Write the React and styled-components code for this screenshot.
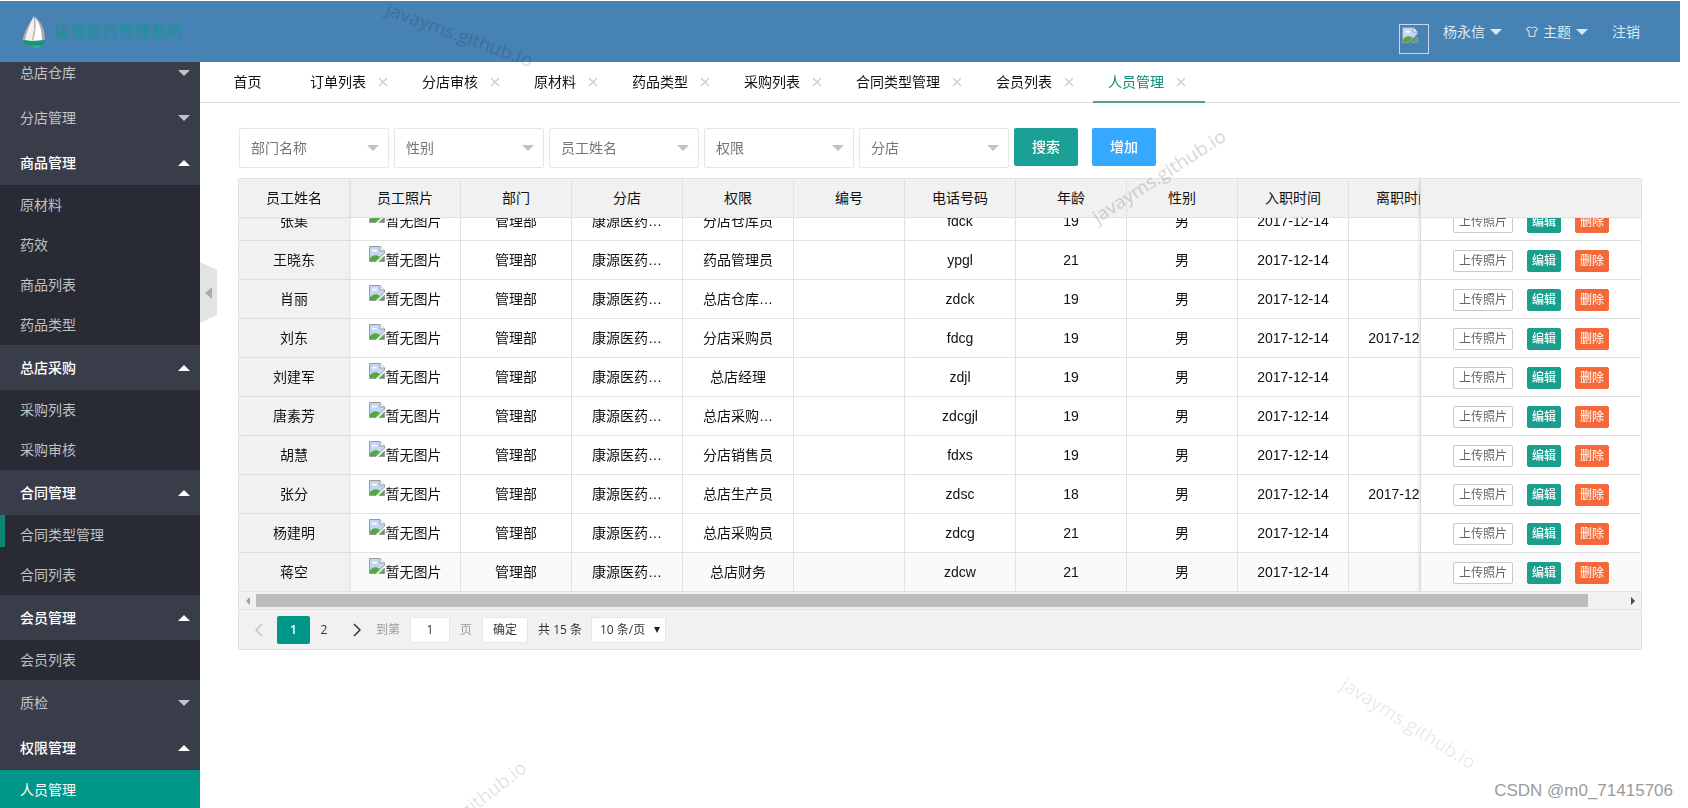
import React, { useLayoutEffect, useRef } from "react";
import styled, { createGlobalStyle, css } from "styled-components";

const GlobalStyle = createGlobalStyle`
  *, *::before, *::after { box-sizing: border-box; }
  body {
    margin: 0;
    background: #fff;
    color: #111;
    font: 14px/20px "Liberation Sans", "Noto Sans CJK SC", sans-serif;
  }
  button, input, select { font: inherit; color: inherit; margin: 0; }
  ul { list-style: none; margin: 0; padding: 0; }
  a { color: inherit; text-decoration: none; }
`;

const Page = styled.div`
  position: relative;
  display: flex;
  flex-direction: column;
  height: 100vh;
  padding: 1px 8px 0 0;
  overflow: hidden;
`;

/* ---------- top bar ---------- */

const TopBar = styled.header`
  flex: none;
  display: flex;
  align-items: center;
  justify-content: space-between;
  height: 61px;
  padding: 0 40px 0 20px;
  background: #4682b4;
`;

const Brand = styled.a`
  display: flex;
  align-items: center;
  gap: 7px;
  color: #22909c;
  font-size: 16px;
  font-weight: 500;
`;

const UserMenu = styled.nav`
  display: flex;
  align-items: center;
  color: #dbe8f2;
`;

const Avatar = styled.span`
  width: 30px;
  height: 30px;
  margin: 14px 14px 0 0;
  padding: 2px;
  border: 1px solid #c5d8e8;
  line-height: 0;
`;

const MenuLink = styled.a`
  display: flex;
  align-items: center;
  gap: 5px;
  margin-left: ${(p) => (p.$first ? 0 : 24)}px;
`;

const Caret = styled.span`
  width: 0;
  height: 0;
  border: 6px solid transparent;
  ${(p) =>
    p.$up
      ? css`border-top-width: 0; border-bottom-color: currentColor;`
      : css`border-bottom-width: 0; border-top-color: currentColor;`}
`;

/* ---------- side navigation ---------- */

const Body = styled.div`
  flex: 1;
  display: flex;
  min-height: 0;
`;

const Side = styled.aside`
  position: relative;
  flex: none;
  width: 200px;
  background: #393d49;
`;

const SideScroll = styled.nav`
  height: 100%;
  overflow: auto;
  scrollbar-width: none;
`;

const NavHead = styled.button`
  display: flex;
  align-items: center;
  justify-content: space-between;
  width: 100%;
  height: 45px;
  padding: 0 10px 0 20px;
  border: 0;
  background: none;
  color: ${(p) => (p.$open ? "#fff" : "#c4c5c9")};
  font-weight: ${(p) => (p.$open ? 500 : 400)};
  text-align: left;
`;

const NavSub = styled.ul`
  background: #282b33;
`;

const NavLink = styled.a`
  display: block;
  position: relative;
  height: 40px;
  padding: 0 20px;
  line-height: 40px;
  color: ${(p) => (p.$active ? "#fff" : "#bfc0c2")};
  background: ${(p) => (p.$active ? "#009688" : "none")};
  ${(p) =>
    p.$marked &&
    css`
      &::before {
        content: "";
        position: absolute;
        left: 0;
        top: 0;
        width: 5px;
        height: 32px;
        background: #0c8478;
      }
    `}
`;

const Collapse = styled.button`
  position: absolute;
  left: 100%;
  top: 200px;
  z-index: 5;
  display: flex;
  align-items: center;
  justify-content: center;
  width: 17px;
  height: 61px;
  padding: 0;
  border: 0;
  background: #e2e3e5;
  clip-path: polygon(0 0, 100% 13%, 100% 87%, 0 100%);
  &::before {
    content: "";
    border: 6px solid transparent;
    border-left: 0;
    border-right: 7px solid #acacae;
  }
`;

/* ---------- tabs ---------- */

const Main = styled.main`
  flex: 1;
  min-width: 0;
`;

const Tabs = styled.div`
  display: flex;
  height: 41px;
  padding-left: 15px;
  border-bottom: 1px solid #dcdcdc;
`;

const Tab = styled.div`
  display: flex;
  align-items: center;
  justify-content: center;
  gap: 8px;
  height: 41px;
  min-width: 65px;
  margin-right: ${(p) => (p.$home ? 15 : 0)}px;
  padding: 0 15px;
  color: ${(p) => (p.$active ? "#0f8a76" : "#111")};
  border-bottom: 2px solid ${(p) => (p.$active ? "#5a9f8b" : "transparent")};
`;

const TabClose = styled.button`
  display: flex;
  align-items: center;
  justify-content: center;
  width: 18px;
  height: 18px;
  padding: 0;
  border: 0;
  background: none;
  color: #cecece;
`;

/* ---------- filters ---------- */

const Content = styled.section`
  padding: 25px 38px;
`;

const Filters = styled.form`
  display: flex;
  gap: 5px;
  margin: 0 0 10px 1px;
`;

const Field = styled.label`
  position: relative;
  width: 150px;
  &::after {
    content: "";
    position: absolute;
    right: 10px;
    top: 17px;
    border: 6px solid transparent;
    border-bottom: 0;
    border-top-color: #c2c2c2;
    pointer-events: none;
  }
`;

const FieldSelect = styled.select`
  display: block;
  appearance: none;
  width: 100%;
  height: 40px;
  padding: 0 28px 0 11px;
  border: 1px solid #e6e6e6;
  border-radius: 2px;
  background: #fff;
  color: #757575;
`;

const MainButton = styled.button`
  width: 64px;
  height: 38px;
  margin-right: 9px;
  padding: 0;
  border: 0;
  border-radius: 2px;
  background: ${(p) => (p.$tone === "blue" ? "#35a8ff" : "#1aa094")};
  color: #fff;
  font-weight: 500;
`;

/* ---------- table ---------- */

const Panel = styled.div`
  border: 1px solid #e2e2e2;
  background: #f1f1f1;
`;

const Viewport = styled.div`
  height: 413px;
  overflow: auto;
  scrollbar-width: none;
  background: #fff;
`;

const Table = styled.table`
  width: 100%;
  min-width: 1442px;
  table-layout: fixed;
  border-collapse: separate;
  border-spacing: 0;
`;

const cell = css`
  height: 39px;
  padding: 0;
  border: solid #e2e2e2;
  border-width: 0 1px 1px 0;
  text-align: center;
  white-space: nowrap;
  font-weight: 400;
`;

const pinned = css`
  position: sticky;
  z-index: ${(p) => (p.$head ? 3 : 1)};
  ${(p) => p.$pin === "left" && css`left: 0; box-shadow: 1px 0 3px rgba(0, 0, 0, 0.06);`}
  ${(p) =>
    p.$pin === "right" &&
    css`
      right: 0;
      border-left: 1px solid #dadada;
      border-right: 0;
      box-shadow: -2px 0 3px -1px rgba(0, 0, 0, 0.12);
    `}
`;

const Th = styled.th`
  ${cell}
  position: sticky;
  top: 0;
  z-index: 2;
  background: #f1f1f1;
  ${(p) => p.$pin && pinned}
`;

const Td = styled.td`
  ${cell}
  background: ${(p) => (p.$pin === "left" ? "#f1f1f1" : "#fff")};
  tr:last-child > & {
    background: ${(p) => (p.$pin === "left" ? "#f1f1f1" : "#fafafa")};
  }
  ${(p) => p.$pin && pinned}
`;

const Photo = styled.span`
  display: flex;
  align-items: flex-start;
  justify-content: center;
  gap: 1px;
  height: 28px;
  line-height: 28px;
`;

const Actions = styled.div`
  display: flex;
  justify-content: center;
  gap: 14px;
  padding-top: 1px;
`;

const tones = {
  plain: { bg: "#fff", fg: "#666", line: "#c9c9c9", width: 60 },
  green: { bg: "#1a9f8e", fg: "#fff", line: "#1a9f8e", width: 34 },
  orange: { bg: "#f4683a", fg: "#ffe9e0", line: "#f4683a", width: 34 },
};

const SmallButton = styled.button`
  width: ${(p) => tones[p.$tone].width}px;
  height: 22px;
  padding: 0;
  border: 1px solid ${(p) => tones[p.$tone].line};
  border-radius: 2px;
  background: ${(p) => tones[p.$tone].bg};
  color: ${(p) => tones[p.$tone].fg};
  font-size: 12px;
  line-height: 20px;
  font-weight: ${(p) => (p.$tone === "plain" ? 400 : 500)};
`;

const ScrollBar = styled.div`
  display: flex;
  align-items: center;
  height: 18px;
  border-bottom: 1px solid #e2e2e2;
`;

const ScrollArrow = styled.span`
  flex: none;
  display: flex;
  justify-content: center;
  width: 17px;
  color: ${(p) => (p.$right ? "#444" : "#a0a0a0")};
  &::before {
    content: "";
    border: 4px solid transparent;
    ${(p) =>
      p.$right
        ? css`border-right: 0; border-left-color: currentColor;`
        : css`border-left: 0; border-right-color: currentColor;`}
  }
`;

const ScrollTrack = styled.div`
  flex: 1;
  &::before {
    content: "";
    display: block;
    width: 97.4%;
    height: 13px;
    background: #bdbdbd;
  }
`;

/* ---------- pager ---------- */

const Pager = styled.div`
  display: flex;
  align-items: center;
  height: 39px;
  padding-left: 6px;
  font-family: "Open Sans", "Noto Sans CJK SC", sans-serif;
  font-size: 12px;
  color: #333;
`;

const PageButton = styled.button`
  display: flex;
  align-items: center;
  justify-content: center;
  width: ${(p) => (p.$current ? 33 : 28)}px;
  height: 28px;
  padding: 0;
  border: 0;
  border-radius: 2px;
  background: ${(p) => (p.$current ? "#009688" : "none")};
  color: ${(p) => (p.$current ? "#fff" : p.disabled ? "#c4c4c4" : "#333")};
  font-weight: ${(p) => (p.$current ? 600 : 400)};
`;

const PageNumbers = styled.div`
  display: flex;
  margin: 0 5px 0 4px;
`;

const PageJump = styled.label`
  display: flex;
  align-items: center;
  gap: 10px;
  margin: 0 10px 0 5px;
  color: #999;
`;

const PageInput = styled.input`
  width: 40px;
  height: 26px;
  padding: 0;
  border: 1px solid #e6e6e6;
  border-radius: 2px;
  background: #fff;
  color: #333;
  text-align: center;
`;

const ConfirmButton = styled.button`
  width: 46px;
  height: 26px;
  padding: 0;
  border: 1px solid #e6e6e6;
  border-radius: 2px;
  background: #fff;
`;

const Total = styled.span`
  margin: 0 9px 0 10px;
`;

const SizeField = styled.label`
  position: relative;
  &::after {
    content: "";
    position: absolute;
    right: 6px;
    top: 10px;
    border: 3px solid transparent;
    border-top: 6px solid #222;
    border-bottom: 0;
    pointer-events: none;
  }
`;

const SizeSelect = styled.select`
  display: block;
  appearance: none;
  width: 75px;
  height: 26px;
  padding: 0 16px 0 8px;
  border: 1px solid #e6e6e6;
  border-radius: 2px;
  background: #fff;
`;

/* ---------- watermarks lying over the page ---------- */

const Watermark = styled.span`
  position: absolute;
  z-index: 10;
  left: ${(p) => p.$x}px;
  top: ${(p) => p.$y}px;
  transform: rotate(${(p) => p.$angle}deg);
  transform-origin: 0 50%;
  color: rgba(0, 0, 0, ${(p) => p.$alpha});
  font: 19px/24px "Open Sans", sans-serif;
  pointer-events: none;
`;

const Credit = styled.span`
  position: absolute;
  z-index: 10;
  right: 15px;
  bottom: 5px;
  color: #9b9b9b;
  font-size: 17px;
  line-height: 24px;
  pointer-events: none;
`;

/* ---------- drawings ---------- */

const SailLogo = () => (
  <svg width="27" height="34" viewBox="0 0 27 34" aria-hidden="true">
    <path d="M14 1 C10 8 5 15 3 25 L12 26 C14 18 15 9 14 1Z" fill="#f4f1ee" />
    <path d="M14 1 C10 8 5 15 3 25 L5 25 C7 16 10 9 14 1Z" fill="#b9a9a4" />
    <path d="M15 2 C16 12 15 19 12 26 L23 25 C23 17 21 9 15 2Z" fill="#fff" />
    <path d="M14 1 C15 9 14 18 12 26 L13 26 C16 18 16 9 14 1Z" fill="#c9bdb8" />
    <path d="M15 2 C20 8 22 17 22 25 L25 25 C25 16 22 7 15 2Z" fill="#b7a7a0" />
    <path d="M2 26 C8 24 12 29 25 26 L22 31 C16 28 10 32 5 29Z" fill="#0d9a6c" />
    <path d="M11 31 C15 30 18 31 21 31 C18 34 15 34 11 31Z" fill="#39a98f" />
  </svg>
);

const BrokenImage = () => (
  <svg width="16" height="16" viewBox="0 0 16 16" aria-hidden="true">
    <path d="M1 .5 H11 L15.500 5 V7 L7 15.500 H.5 V.5Z" fill="#c3d6f5" stroke="#9a9a9a" />
    <path d="M11 .5 V5 H15.500" fill="#fff" stroke="#9a9a9a" />
    <path d="M3 5.500 a1.500 1.500 0 0 1 2.500 -1.500 a1.500 1.500 0 0 1 2.500 1.500Z" fill="#fff" />
    <path d="M1 15 V12 C4 9 7 8 11 11 L7 15Z" fill="#4faa3c" />
    <path d="M10 15.500 L15.500 10 V15.500Z" fill="#4faa3c" stroke="#9a9a9a" />
  </svg>
);

const Shirt = () => (
  <svg width="12" height="11" viewBox="0 0 12 11" fill="none" stroke="currentColor" aria-hidden="true">
    <path d="M4 .7 C4.500 2.200 7.500 2.200 8 .7 L11.400 2.500 L10.500 5 L9 4.500 V10.300 H3 V4.500 L1.500 5 L.6 2.500Z" />
  </svg>
);

const Cross = () => (
  <svg width="10" height="10" viewBox="0 0 10 10" stroke="currentColor" strokeWidth="1.500" aria-hidden="true">
    <path d="M1 1 L9 9 M9 1 L1 9" />
  </svg>
);

const Chevron = ({ right }) => (
  <svg width="8" height="14" viewBox="0 0 8 14" fill="none" stroke="currentColor" strokeWidth="1.500" aria-hidden="true">
    <path d={right ? "M1 1 L7 7 L1 13" : "M7 1 L1 7 L7 13"} />
  </svg>
);

/* ---------- data ---------- */

const NAV = [
  { title: "总店仓库" },
  { title: "分店管理" },
  { title: "商品管理", items: ["原材料", "药效", "商品列表", "药品类型"] },
  { title: "总店采购", items: ["采购列表", "采购审核"] },
  { title: "合同管理", items: ["合同类型管理", "合同列表"] },
  { title: "会员管理", items: ["会员列表"] },
  { title: "质检" },
  { title: "权限管理", items: ["人员管理"] },
];

const TABS = ["首页", "订单列表", "分店审核", "原材料", "药品类型", "采购列表", "合同类型管理", "会员列表", "人员管理"];
const FILTERS = ["部门名称", "性别", "员工姓名", "权限", "分店"];
const COLUMNS = ["员工姓名", "员工照片", "部门", "分店", "权限", "编号", "电话号码", "年龄", "性别", "入职时间", "离职时间"];

const STAFF = [
  ["张集", "分店仓库员", "fdck", 19],
  ["王晓东", "药品管理员", "ypgl", 21],
  ["肖丽", "总店仓库…", "zdck", 19],
  ["刘东", "分店采购员", "fdcg", 19, "2017-12-14"],
  ["刘建军", "总店经理", "zdjl", 19],
  ["唐素芳", "总店采购…", "zdcgjl", 19],
  ["胡慧", "分店销售员", "fdxs", 19],
  ["张分", "总店生产员", "zdsc", 18, "2017-12-14"],
  ["杨建明", "总店采购员", "zdcg", 21],
  ["蒋空", "总店财务", "zdcw", 21],
];

const WATERMARKS = [
  { x: 387, y: -4, angle: 20, alpha: 0.16 },
  { x: 1094, y: 206, angle: -33, alpha: 0.18 },
  { x: 1343, y: 670, angle: 32, alpha: 0.1 },
  { x: 402, y: 848, angle: -38, alpha: 0.13 },
];

function Sidebar() {
  const scroller = useRef(null);
  useLayoutEffect(() => {
    scroller.current.scrollTop = 12;
  }, []);
  return (
    <Side>
      <SideScroll ref={scroller}>
        {NAV.map(({ title, items }) => (
          <div key={title}>
            <NavHead type="button" $open={!!items} aria-expanded={!!items}>
              {title}
              <Caret $up={!!items} />
            </NavHead>
            {items && (
              <NavSub>
                {items.map((item) => (
                  <li key={item}>
                    <NavLink href="#" $active={item === "人员管理"} $marked={item === "合同类型管理"}>
                      {item}
                    </NavLink>
                  </li>
                ))}
              </NavSub>
            )}
          </div>
        ))}
      </SideScroll>
      <Collapse type="button" aria-label="收起" />
    </Side>
  );
}

function StaffTable() {
  const viewport = useRef(null);
  useLayoutEffect(() => {
    viewport.current.scrollTop = viewport.current.scrollHeight;
  }, []);
  return (
    <Viewport ref={viewport}>
      <Table>
        <colgroup>
          {COLUMNS.map((c) => (
            <col key={c} width="111" />
          ))}
          <col />
        </colgroup>
        <thead>
          <tr>
            {COLUMNS.map((c, i) => (
              <Th key={c} $head $pin={i === 0 ? "left" : undefined}>
                {c}
              </Th>
            ))}
            <Th $head $pin="right" />
          </tr>
        </thead>
        <tbody>
          {STAFF.map(([name, role, phone, age, left]) => (
            <tr key={name}>
              <Td $pin="left">{name}</Td>
              <Td>
                <Photo>
                  <BrokenImage />
                  暂无图片
                </Photo>
              </Td>
              <Td>管理部</Td>
              <Td>康源医药…</Td>
              <Td>{role}</Td>
              <Td />
              <Td>{phone}</Td>
              <Td>{age}</Td>
              <Td>男</Td>
              <Td>2017-12-14</Td>
              <Td>{left}</Td>
              <Td $pin="right">
                <Actions>
                  <SmallButton type="button" $tone="plain">上传照片</SmallButton>
                  <SmallButton type="button" $tone="green">编辑</SmallButton>
                  <SmallButton type="button" $tone="orange">删除</SmallButton>
                </Actions>
              </Td>
            </tr>
          ))}
        </tbody>
      </Table>
    </Viewport>
  );
}

export default function App() {
  return (
    <Page>
      <GlobalStyle />
      <TopBar>
        <Brand href="#">
          <SailLogo />
          康源医药管理系统
        </Brand>
        <UserMenu>
          <Avatar>
            <BrokenImage />
          </Avatar>
          <MenuLink href="#" $first>
            杨永信
            <Caret />
          </MenuLink>
          <MenuLink href="#">
            <Shirt />
            主题
            <Caret />
          </MenuLink>
          <MenuLink href="#">注销</MenuLink>
        </UserMenu>
      </TopBar>
      <Body>
        <Sidebar />
        <Main>
          <Tabs>
            {TABS.map((t, i) => (
              <Tab key={t} $home={i === 0} $active={t === "人员管理"}>
                <a href="#">{t}</a>
                {i > 0 && (
                  <TabClose type="button" aria-label={`关闭${t}`}>
                    <Cross />
                  </TabClose>
                )}
              </Tab>
            ))}
          </Tabs>
          <Content>
            <Filters>
              {FILTERS.map((f) => (
                <Field key={f}>
                  <FieldSelect aria-label={f} defaultValue="">
                    <option value="">{f}</option>
                  </FieldSelect>
                </Field>
              ))}
              <MainButton type="button">搜索</MainButton>
              <MainButton type="button" $tone="blue">增加</MainButton>
            </Filters>
            <Panel>
              <StaffTable />
              <ScrollBar>
                <ScrollArrow />
                <ScrollTrack />
                <ScrollArrow $right />
              </ScrollBar>
              <Pager>
                <PageButton type="button" disabled aria-label="上一页">
                  <Chevron />
                </PageButton>
                <PageNumbers>
                  <PageButton type="button" $current>1</PageButton>
                  <PageButton type="button">2</PageButton>
                </PageNumbers>
                <PageButton type="button" aria-label="下一页">
                  <Chevron right />
                </PageButton>
                <PageJump>
                  到第
                  <PageInput defaultValue="1" />
                  页
                </PageJump>
                <ConfirmButton type="button">确定</ConfirmButton>
                <Total>共 15 条</Total>
                <SizeField>
                  <SizeSelect aria-label="每页条数">
                    <option>10 条/页</option>
                  </SizeSelect>
                </SizeField>
              </Pager>
            </Panel>
          </Content>
        </Main>
      </Body>
      {WATERMARKS.map((w) => (
        <Watermark key={w.x} $x={w.x} $y={w.y} $angle={w.angle} $alpha={w.alpha}>
          javayms.github.io
        </Watermark>
      ))}
      <Credit>CSDN @m0_71415706</Credit>
    </Page>
  );
}
